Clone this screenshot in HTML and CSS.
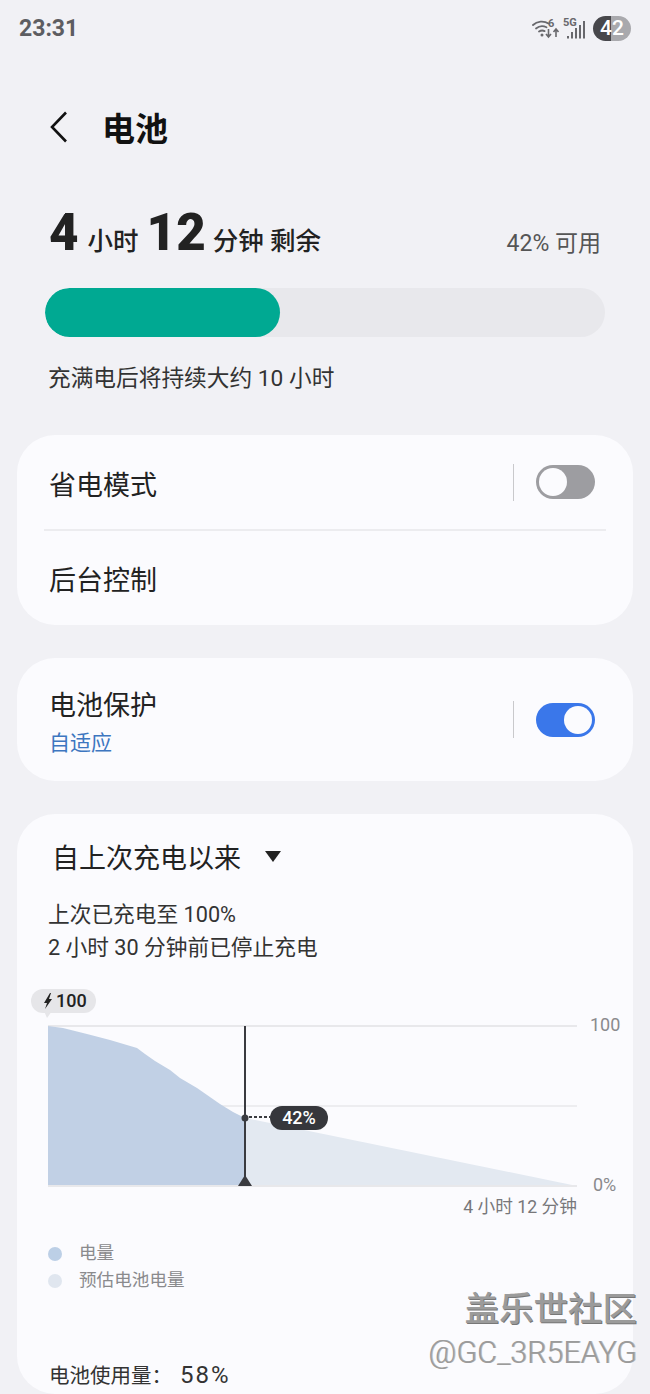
FILE: index.html
```html
<!DOCTYPE html>
<html lang="zh-CN">
<head>
  <meta charset="UTF-8">
  <title>电池</title>
  <link rel="stylesheet" href="styles.css">
</head>
<body>

  <div class="status-bar">
    <span class="time">23:31</span>
    <div class="status-icons">
      <svg class="wifi-icon" width="28" height="24" viewBox="0 0 28 24">
        <g fill="none" stroke="#68686c" stroke-width="1.8" stroke-linecap="round">
          <path d="M1 9C5 5 12 4.5 16.5 7.5"/>
          <path d="M4 12.5C7 10 11 9.500 14.5 11.3"/>
          <path d="M7 15.5C9 14.3 11 14.3 12.6 15.1"/>
        </g>
        <circle cx="10" cy="19" r="1.5" fill="#68686c"/>
        <text x="16" y="11" class="tiny">6</text>
        <path d="M16.5 13v8M14 18l2.5 3 2.5-3" fill="none" stroke="#68686c" stroke-width="1.6"/>
        <path d="M24 21v-8M21.5 16l2.5-3 2.5 3" fill="none" stroke="#68686c" stroke-width="1.6"/>
      </svg>
      <svg class="signal-icon" width="24" height="24" viewBox="0 0 24 24">
        <text x="0" y="10" class="tiny">5G</text>
        <rect x="4" y="20" width="2" height="2.5" fill="#68686c"/>
        <rect x="8" y="16" width="2" height="6.5" fill="#68686c"/>
        <rect x="12" y="12" width="2" height="10.5" fill="#68686c"/>
        <rect x="16" y="9" width="2" height="13.5" fill="#68686c"/>
        <rect x="20" y="5" width="2" height="17.5" fill="#68686c"/>
      </svg>
      <div class="battery-pill">42</div>
    </div>
  </div>

  <div class="page-head">
    <svg class="back-icon" width="20" height="32" viewBox="0 0 20 32">
      <path d="M17 1.5L3 16l14 14.5" fill="none" stroke="#111" stroke-width="2.6"/>
    </svg>
    <h1>电池</h1>
  </div>

  <div class="summary">
    <div class="remaining">
      <b>4</b><span>小时</span><b>12</b><span>分钟 剩余</span>
    </div>
    <div class="available">42% 可用</div>
  </div>

  <div class="level-bar"><div class="level-fill" style="width:42%"></div></div>
  <p class="full-note">充满电后将持续大约 10 小时</p>

  <div class="card card-power">
    <div class="row row-saver">
      <span class="row-title">省电模式</span>
      <i class="v-sep"></i>
      <span class="toggle"></span>
    </div>
    <div class="row-line"></div>
    <div class="row row-bg">
      <span class="row-title">后台控制</span>
    </div>
  </div>

  <div class="card card-protect">
    <div class="row">
      <div class="row-text">
        <span class="row-title">电池保护</span>
        <span class="row-sub">自适应</span>
      </div>
      <i class="v-sep"></i>
      <span class="toggle on"></span>
    </div>
  </div>

  <div class="card card-usage">
    <div class="dropdown">
      <span>自上次充电以来</span>
      <i class="caret"></i>
    </div>
    <p class="last-charge">上次已充电至 100%<br>2 小时 30 分钟前已停止充电</p>

    <svg class="chart" width="616" height="240" viewBox="17 986 616 240">
      <line x1="48" y1="1026" x2="577" y2="1026" stroke="#e8e8eb" stroke-width="2"/>
      <line x1="48" y1="1106" x2="577" y2="1106" stroke="#e8e8eb" stroke-width="1.5"/>
      <polygon fill="#e3e9f1" points="245,1118 577,1186 245,1186"/>
      <polygon fill="#c1d0e5" points="48,1026 63,1028 87,1034 110,1040 137,1048 145,1054 155,1061 170,1070 180,1078 197,1088 220,1104 233,1112 245,1118 245,1186 48,1186"/>
      <line x1="48" y1="1186" x2="577" y2="1186" stroke="#e8e8eb" stroke-width="2"/>
      <line x1="245" y1="1026" x2="245" y2="1186" stroke="#3a3b40" stroke-width="2"/>
      <polygon fill="#3a3b40" points="245,1175 252,1186 238,1186"/>
      <circle cx="245" cy="1118" r="3.5" fill="#3a3b40"/>
      <line x1="249" y1="1117" x2="270" y2="1117" stroke="#3a3b40" stroke-width="2" stroke-dasharray="3 2"/>
      <rect x="270" y="1106" width="58" height="24" rx="12" fill="#36373c"/>
      <text x="299" y="1124" class="pill-text">42%</text>
      <rect x="31" y="989" width="65" height="24" rx="12" fill="#e6e6e9"/>
      <polygon fill="#e6e6e9" points="44,1011 52,1011 47,1018"/>
      <path d="M50 993l-6 10h3l-2 6 7-10h-3l2-6z" fill="#222"/>
      <text x="56" y="1007" class="bubble-text">100</text>
      <text x="590" y="1031" class="axis-text">100</text>
      <text x="593" y="1191" class="axis-text">0%</text>
      <text x="577" y="1213" class="axis-time">4 小时 12 分钟</text>
    </svg>

    <div class="legend">
      <div class="legend-item"><i class="dot"></i>电量</div>
      <div class="legend-item"><i class="dot est"></i>预估电池电量</div>
    </div>

    <div class="usage-line">电池使用量： <span class="usage-pct">58%</span></div>
  </div>

  <div class="watermark">
    <div class="wm-name">盖乐世社区</div>
    <div class="wm-user">@GC_3R5EAYG</div>
  </div>

</body>
</html>
```

FILE: styles.css
```css
html, body {
  margin: 0;
  height: 1394px;
  overflow: hidden;
}

body {
  position: relative;
  background: #f1f1f5;
  color: #222;
  font-family: Roboto, "Noto Sans CJK SC", sans-serif;
}

.status-bar {
  display: flex;
  justify-content: space-between;
  align-items: center;
  height: 56px;
  padding: 0 19px;
}

.time {
  font-size: 23px;
  font-weight: 700;
  color: #5d5d61;
}

.status-icons {
  display: flex;
  align-items: center;
  gap: 3px;
}

.tiny {
  font-size: 11px;
  font-weight: 700;
  fill: #68686c;
}

.battery-pill {
  width: 38px;
  height: 25px;
  margin-left: 3px;
  border-radius: 13px;
  background: linear-gradient(90deg, #47474b 0 47%, #a9a9ad 47%);
  color: #fff;
  font-size: 21px;
  font-weight: 500;
  line-height: 25px;
  text-align: center;
}

.page-head {
  display: flex;
  align-items: center;
  height: 44px;
  margin-top: 49px;
  padding-left: 49px;
}

h1 {
  margin: 0 0 0 33px;
  font-size: 33px;
  font-weight: 700;
  color: #111;
}

.summary {
  display: flex;
  justify-content: space-between;
  align-items: baseline;
  margin-top: 54px;
  padding: 0 49px;
}

.remaining {
  display: flex;
  align-items: baseline;
  font-size: 25.5px;
  font-weight: 500;
}

.remaining b {
  font-size: 51px;
  font-weight: 900;
  line-height: 60px;
}

.remaining span {
  margin: 0 8px 0 9px;
}

.remaining span:last-child {
  margin-left: 7px;
}

.available {
  align-self: flex-end;
  margin-bottom: 4px;
  font-size: 23px;
  line-height: 30px;
  color: #555;
}

.level-bar {
  height: 49px;
  margin: 25px 45px 0;
  border-radius: 25px;
  background: #e8e8ec;
  overflow: hidden;
}

.level-fill {
  height: 100%;
  border-radius: 25px;
  background: #00a992;
}

.full-note {
  margin: 27px 48px 0;
  font-size: 22.7px;
  line-height: 30px;
  color: #333;
}

.card {
  margin: 0 17px;
  border-radius: 38px;
  background: #fbfbfe;
}

.card-power {
  margin-top: 41px;
  height: 190px;
}

.card-protect {
  margin-top: 33px;
  height: 123px;
}

.card-usage {
  margin-top: 33px;
  height: 580px;
}

.row {
  display: flex;
  align-items: center;
  padding: 0 38px 0 32px;
}

.card-protect .row {
  height: 123px;
}

.row-saver {
  height: 94px;
}

.row-bg {
  height: 95px;
}

.row-title {
  flex: 1;
  font-size: 27px;
  line-height: 36px;
  color: #222;
}

.row-saver .row-title {
  padding-top: 8px;
}

.row-bg .row-title {
  padding-top: 4px;
}

.row-text {
  display: flex;
  flex: 1;
  flex-direction: column;
  padding-top: 6px;
}

.row-sub {
  margin-top: 5px;
  font-size: 21px;
  line-height: 28px;
  color: #3d76c0;
}

.row-line {
  height: 2px;
  margin: 0 27px;
  background: #ececef;
}

.v-sep {
  width: 1px;
  height: 37px;
  margin-right: 22px;
  background: #c9c9cc;
}

.toggle {
  position: relative;
  box-sizing: border-box;
  width: 59px;
  height: 34px;
  border-radius: 17px;
  background: #9d9da1;
}

.toggle::after {
  content: "";
  position: absolute;
  top: 3px;
  left: 3px;
  width: 28px;
  height: 28px;
  border-radius: 50%;
  background: #fbfbfe;
}

.toggle.on {
  background: #3a77ea;
}

.toggle.on::after {
  left: 28px;
}

.dropdown {
  display: flex;
  align-items: center;
  padding: 27px 0 0 35px;
  font-size: 27px;
  line-height: 36px;
  color: #222;
}

.caret {
  width: 0;
  height: 0;
  margin: 0 0 6px 24px;
  border-left: 8px solid transparent;
  border-right: 8px solid transparent;
  border-top: 11px solid #222;
}

.last-charge {
  margin: 21px 31px 0;
  font-size: 21.7px;
  line-height: 33px;
  color: #333;
}

.chart {
  display: block;
  margin-top: 22px;
}

.pill-text {
  font-size: 18px;
  font-weight: 500;
  fill: #fff;
  text-anchor: middle;
}

.bubble-text {
  font-size: 18px;
  font-weight: 500;
  fill: #222;
}

.axis-text {
  font-size: 18px;
  fill: #8a8a8d;
}

.axis-time {
  font-size: 17.7px;
  fill: #77777a;
  text-anchor: end;
}

.legend {
  display: flex;
  flex-direction: column;
  gap: 2px;
  margin: 15px 0 0 31px;
}

.legend-item {
  display: flex;
  align-items: center;
  font-size: 17.6px;
  line-height: 25px;
  color: #8a8a8d;
}

.dot {
  width: 14px;
  height: 14px;
  margin-right: 17px;
  border-radius: 50%;
  background: #bccfe6;
}

.dot.est {
  background: #e0e6ef;
}

.usage-line {
  margin: 67px 32px 0;
  font-size: 20.5px;
  line-height: 30px;
  color: #333;
}

.usage-pct {
  margin-left: 3px;
  font-size: 24px;
  letter-spacing: 2px;
}

.watermark {
  position: absolute;
  top: 1287px;
  right: 13px;
  text-align: right;
  color: #9b9b9b;
  text-shadow: 1px 1px 0 #777;
}

.wm-name {
  font-size: 34.5px;
  font-weight: 500;
  line-height: 44px;
}

.wm-user {
  margin-top: 2px;
  font-size: 30.5px;
  font-weight: 300;
  line-height: 40px;
  text-shadow: 1px 0 0 #bbb;
}
```
